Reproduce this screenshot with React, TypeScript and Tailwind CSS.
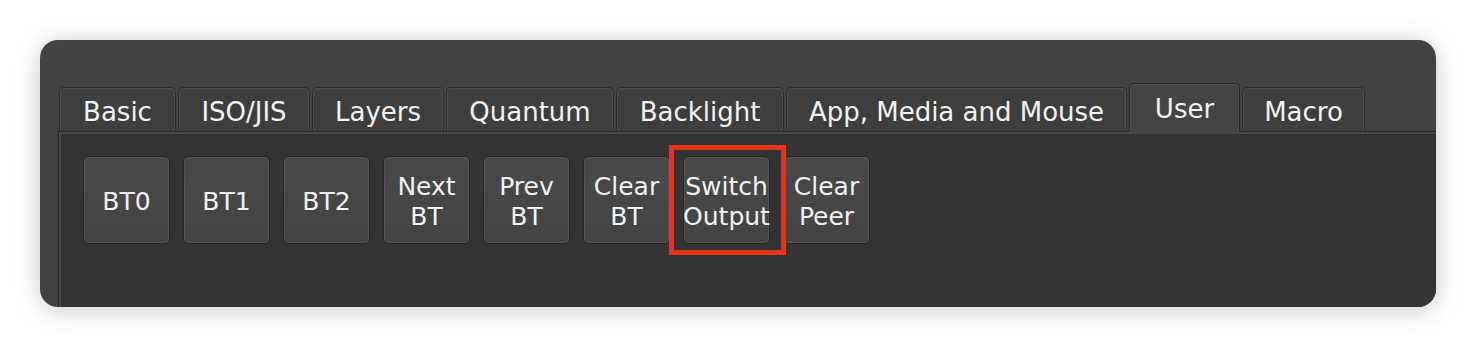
const tabs = [
  { label: "Basic", w: "w-[117px]" },
  { label: "ISO/JIS", w: "w-[132px]" },
  { label: "Layers", w: "w-[132px]" },
  { label: "Quantum", w: "w-[168px]" },
  { label: "Backlight", w: "w-[168px]" },
  { label: "App, Media and Mouse", w: "w-[341px]" },
  { label: "User", w: "w-[111px]", active: true },
  { label: "Macro", w: "w-[123px]" },
];

const keys = [
  ["BT0"],
  ["BT1"],
  ["BT2"],
  ["Next", "BT"],
  ["Prev", "BT"],
  ["Clear", "BT"],
  ["Switch", "Output"],
  ["Clear", "Peer"],
];

const Key = ({ lines }: { lines: string[] }) => (
  <div className="w-[87px] h-[88px] rounded-[5px] border border-[#272727] bg-[#272727]">
    <div className="w-full h-full rounded-[4px] border border-[#555555] bg-gradient-to-b from-[#4a4a4a] to-[#434343] flex flex-col items-center justify-center pt-[3px] text-[25px] leading-[30px] text-[#f2f2f2] whitespace-nowrap">
      {lines.map((l, i) => (
        <span key={i}>{l}</span>
      ))}
    </div>
  </div>
);

export default function App() {
  return (
    <div className="w-[1476px] h-[348px] bg-white pt-[40px] pl-[40px] font-['DejaVu_Sans',sans-serif]">
      <div className="w-[1396px] h-[267px] rounded-[18px] bg-[#424242] overflow-hidden shadow-[0_3px_26px_rgba(0,0,0,0.22)] flex flex-col pt-[43px]">
        <div className="flex items-end gap-[2px] pl-[19px] h-[48px]">
          {tabs.map((t) =>
            t.active ? (
              <div
                key={t.label}
                className={`${t.w} h-[48px] relative z-10 rounded-t-[5px] border border-b-0 border-[#2a2a2a] bg-[#2a2a2a]`}
              >
                <div className="w-full h-[50px] rounded-t-[4px] border-t border-x border-[#4f4f4f] bg-[#444444] flex justify-center pt-[9px] text-[26px] leading-[30px] text-[#f2f2f2]">
                  {t.label}
                </div>
              </div>
            ) : (
              <div
                key={t.label}
                className={`${t.w} h-[44px] rounded-t-[5px] border border-b-0 border-[#2b2b2b] bg-[#2b2b2b]`}
              >
                <div className="w-full h-full rounded-t-[4px] border-t border-x border-[#4d4d4d] bg-[#3e3e3e] flex items-center justify-center pt-[4px] text-[26px] leading-[30px] text-[#f2f2f2]">
                  {t.label}
                </div>
              </div>
            )
          )}
        </div>
        <div className="ml-[18px] flex-1 border-t border-l border-[#2a2a2a]">
          <div className="h-full border-t-2 border-l-2 border-[#494949] bg-[#343434] flex gap-[13px] pl-[22px] pt-[22px]">
            {keys.map((k, i) => (
              <div key={i} className="relative">
                <Key lines={k} />
                {k[0] === "Switch" && (
                  <div className="absolute -left-[14px] -top-[11px] w-[117px] h-[110px] border-[5px] border-[#e5341c] z-10" />
                )}
              </div>
            ))}
          </div>
        </div>
      </div>
    </div>
  );
}
